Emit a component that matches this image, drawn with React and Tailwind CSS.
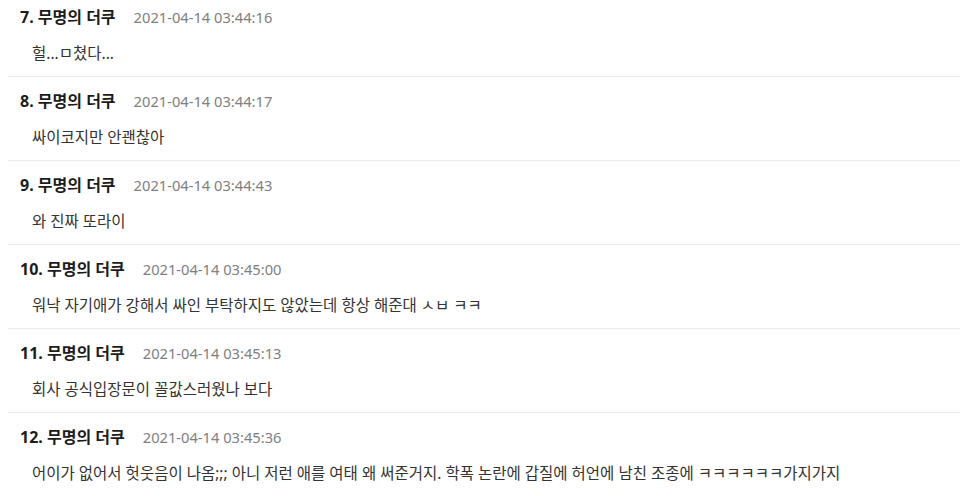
const COMMENTS = [
  { no: 7, time: "2021-04-14 03:44:16", text: "헐...ㅁ쳤다..." },
  { no: 8, time: "2021-04-14 03:44:17", text: "싸이코지만 안괜찮아" },
  { no: 9, time: "2021-04-14 03:44:43", text: "와 진짜 또라이" },
  { no: 10, time: "2021-04-14 03:45:00", text: "워낙 자기애가 강해서 싸인 부탁하지도 않았는데 항상 해준대 ㅅㅂ ㅋㅋ" },
  { no: 11, time: "2021-04-14 03:45:13", text: "회사 공식입장문이 꼴값스러웠나 보다" },
  { no: 12, time: "2021-04-14 03:45:36", text: "어이가 없어서 헛웃음이 나옴;;; 아니 저런 애를 여태 왜 써준거지. 학폭 논란에 갑질에 허언에 남친 조종에 ㅋㅋㅋㅋㅋㅋ가지가지" },
];

const Comment = ({ no, time, text }) => (
  <li className="border-t border-[#e9e9e9] pl-3 pt-[14px] pb-[13px]">
    {/* author + date */}
    <div className="flex items-center h-5 leading-5">
      <span className="text-[16px] font-bold text-[#1c1c1c]">{no}. 무명의 더쿠</span>
      <span className="ml-[18px] text-[14.7px] text-[#808080]">{time}</span>
    </div>
    {/* body */}
    <p className="mt-4 pl-3 h-5 leading-5 text-[15.5px] text-[#333]">{text}</p>
  </li>
);

export default function App() {
  return (
    <div
      className="w-[960px] h-[496px] overflow-hidden bg-white"
      style={{ fontFamily: '"Noto Sans", "Noto Sans CJK KR", sans-serif' }}
    >
      <ul className="ml-2 -mt-2">
        {COMMENTS.map((c) => (
          <Comment key={c.no} {...c} />
        ))}
      </ul>
    </div>
  );
}
